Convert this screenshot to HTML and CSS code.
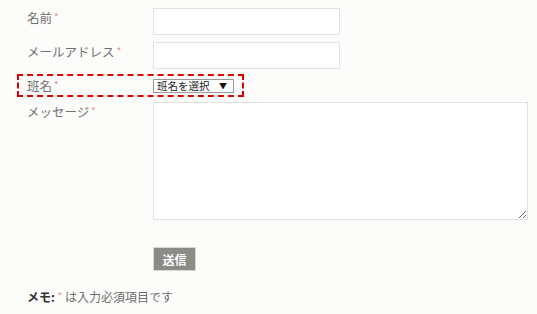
FILE: index.html
```html
<!DOCTYPE html>
<html lang="ja">
<head>
<meta charset="utf-8">
<title>お問い合わせ</title>
<link rel="stylesheet" href="styles.css">
</head>
<body>
<form class="form">
  <div class="row">
    <label class="label">名前<span class="req">*</span></label>
    <input class="field" type="text">
  </div>
  <div class="row row-gap">
    <label class="label">メールアドレス<span class="req">*</span></label>
    <input class="field" type="text">
  </div>
  <div class="row row-select">
    <label class="label">班名<span class="req">*</span></label>
    <span class="select-wrap">
      <select class="select"><option>班名を選択</option></select>
    </span>
  </div>
  <div class="row row-msg">
    <label class="label">メッセージ<span class="req">*</span></label>
    <textarea class="area"></textarea>
  </div>
  <div class="row row-btn">
    <span></span>
    <button class="btn" type="button">送信</button>
  </div>
  <p class="memo"><b class="memo-key">メモ:</b> <span class="req">*</span> は入力必須項目です</p>
</form>
</body>
</html>
```

FILE: styles.css
```css
html, body {
  margin: 0;
  background: #fcfcfa;
}
body {
  font-family: "Noto Sans CJK JP", "Noto Sans", sans-serif;
  color: #6e6e6e;
}
.form {
  padding: 8px 0 0 17px;
}
.row {
  display: grid;
  grid-template-columns: 126px auto;
  align-items: start;
  padding: 0 10px;
}
.label {
  font-size: 12.5px;
  line-height: 18px;
  color: #707070;
}
.req {
  color: #f28a8a;
  font-size: 10px;
  margin-left: 2px;
  vertical-align: 2px;
}
.field {
  box-sizing: border-box;
  width: 187px;
  height: 27px;
  margin: 0;
  border: 1px solid #e2e2e0;
  background: #fff;
  padding: 2px 6px;
}
.row-gap {
  margin-top: 7px;
}
.row-select {
  margin-top: 5px;
  width: max-content;
  height: 23px;
  box-sizing: border-box;
  border: 2px dashed #e00000;
  padding: 0 8px;
  align-items: center;
}
.select-wrap {
  position: relative;
  display: block;
  width: 81px;
  height: 14px;
}
.select-wrap::after {
  content: "▼";
  position: absolute;
  right: 7px;
  top: 1px;
  font-size: 8px;
  line-height: 12px;
  color: #111;
  pointer-events: none;
}
.select {
  appearance: none;
  -webkit-appearance: none;
  box-sizing: border-box;
  display: block;
  width: 81px;
  height: 14px;
  margin: 0;
  padding: 0 3px;
  border: 1px solid #9a9a9a;
  border-radius: 0;
  background: #fff;
  font-family: "Noto Sans CJK JP", sans-serif;
  font-size: 10.5px;
  line-height: 12px;
  color: #222;
}
.row-msg {
  margin-top: 5px;
}
.area {
  box-sizing: border-box;
  display: block;
  width: 375px;
  height: 118px;
  margin: 0;
  border: 1px solid #e2e2e0;
  background: #fff;
}
.row-btn {
  margin-top: 27px;
}
.btn {
  box-sizing: border-box;
  width: 43px;
  height: 24px;
  margin: 0;
  padding: 0;
  border: 1px solid #d6d6d2;
  background: #8a8c85;
  color: #fff;
  font-family: "Noto Sans CJK JP", sans-serif;
  font-size: 12px;
  font-weight: bold;
}
.memo {
  margin: 16px 0 0 10px;
  font-size: 12px;
  line-height: 18px;
  color: #6e6e6e;
}
.memo-key {
  color: #333;
}
.memo .req {
  margin-left: 0;
}
```
